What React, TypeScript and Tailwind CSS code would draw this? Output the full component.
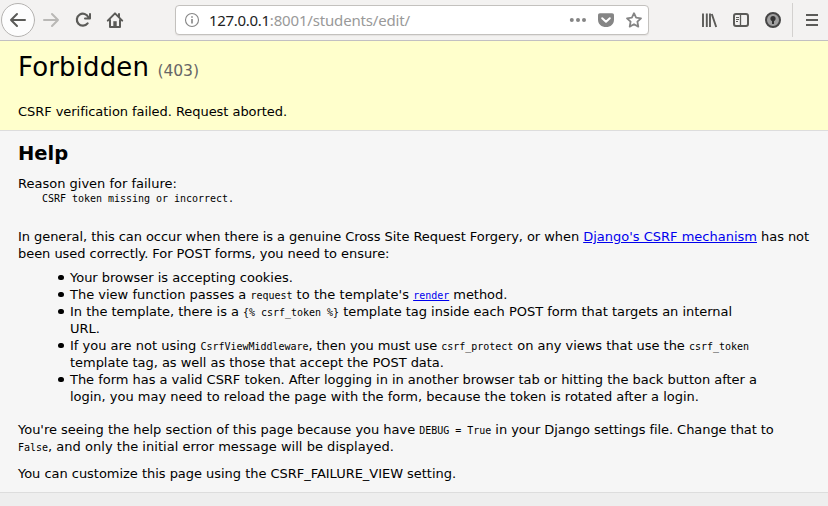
import type { ReactNode } from "react";

function Code({ children }: { children: ReactNode }) {
  return (
    <code className="font-['DejaVu_Sans_Mono',monospace] text-[10px] leading-none tracking-[-0.02px]">{children}</code>
  );
}

function Line({ children, className = "" }: { children: ReactNode; className?: string }) {
  return <span className={`block h-[17px] whitespace-nowrap ${className}`}>{children}</span>;
}

function Item({ children }: { children: ReactNode }) {
  return (
    <li className="flex gap-[6px]">
      <span className="mt-[5.5px] flex w-[6px] shrink-0">
        <span className="h-[5.5px] w-[5.5px] rounded-full bg-black" />
      </span>
      <div>{children}</div>
    </li>
  );
}

function Toolbar() {
  return (
    <header className="flex h-[41px] items-start border-b border-[#c2c0c2] bg-[#f3f2f1] text-[#5b5b58]">
      <div className="flex h-10 w-[175px] shrink-0 items-center">
        <svg width="130" height="40" viewBox="0 0 130 40" fill="none" stroke="currentColor" strokeWidth="2" strokeLinecap="round" strokeLinejoin="round">
          <circle cx="18" cy="20" r="16.5" fill="#fdfdfd" stroke="#b5b3b1" strokeWidth="1" />
          <path d="M25 20H11M17 14l-6 6 6 6" />
          <path stroke="#b9b8b6" d="M44 20h14M52 14l6 6-6 6" />
          <path d="M88.4 17.4A6 6 0 1 0 87.6 23.4" strokeWidth="2.2" />
          <path d="M90 14v4.6h-5" />
          <path d="M107.8 20.6l7.2-7.2 7.2 7.2M110 20v7h10v-7" />
          <path d="M115 21.2v5.8" strokeWidth="3.4" strokeLinecap="butt" />
          <path d="M119 14v2.5" />
        </svg>
      </div>
      <div className="mt-[5px] flex h-[30px] w-[474px] shrink-0 items-center rounded-[4px] border border-[#c3c1be] bg-white shadow-[0_1px_1px_#e5e3e1]">
        <svg className="ml-[8px] shrink-0" width="16" height="16" viewBox="0 0 16 16" fill="none" stroke="#858585">
          <circle cx="8" cy="8" r="6.5" strokeWidth="1.1" />
          <path d="M8 7v4.5M8 4.2v1.6" strokeWidth="1.6" />
        </svg>
        <div className="ml-[9px] w-[351px] whitespace-nowrap font-['Noto_Sans',sans-serif] text-[15px] leading-5 tracking-[-0.17px] text-[#999]">
          <span className="tracking-[-0.3px] text-[#222]">127.0.0.1</span>:8001/students/edit/
        </div>
        <svg className="shrink-0" width="88" height="28" viewBox="560 6 88 28" fill="#858585">
          <circle cx="571.8" cy="20" r="2" /><circle cx="578" cy="20" r="2" /><circle cx="584" cy="20" r="2" />
          <path d="M600 13.2h12c1.3 0 2 .8 2 2v4.2c0 4.7-3.5 7.6-8 7.6s-8-2.9-8-7.6v-4.2c0-1.2.7-2 2-2z" />
          <path d="M602.2 18.2l3.8 3.6 3.8-3.6" fill="none" stroke="#fff" strokeWidth="2" strokeLinecap="round" strokeLinejoin="round" />
          <path d="M634 13.2l2.1 4.5 4.9.6-3.6 3.4.9 4.9-4.3-2.4-4.3 2.4.9-4.9-3.6-3.4 4.9-.6z" fill="none" stroke="#858585" strokeWidth="1.8" strokeLinejoin="round" />
        </svg>
      </div>
      <svg className="ml-auto shrink-0" width="136" height="40" viewBox="692 0 136 40" fill="none" stroke="currentColor" strokeWidth="2">
        <path d="M703 13.5v13.5M706.8 13.5v13.5M710 13.5v13.5M711.8 14l4.4 13" strokeWidth="1.9" />
        <rect x="734" y="14" width="14" height="12" rx="2" />
        <path d="M740.5 14v12" strokeWidth="1.3" />
        <path d="M736 17.5h3M736 19.5h3M736 21.5h2" strokeWidth="1" />
        <circle cx="773" cy="20" r="7" fill="#a0a0a0" stroke="#464646" />
        <circle cx="773" cy="18.6" r="2.6" fill="#333" stroke="none" />
        <path d="M773 19v5" stroke="#333" />
        <path d="M792.5 3v34" stroke="#d3d1cf" strokeWidth="1" />
        <path d="M806 15h12M806 20h12M806 25h12" />
      </svg>
    </header>
  );
}

export default function App() {
  return (
    <div className="flex h-[506px] w-[828px] flex-col overflow-hidden bg-[#eee] font-['DejaVu_Sans',sans-serif] text-[13px] leading-[17px] text-black">
      <Toolbar />
      <section className="h-[90px] shrink-0 border-b border-[#ddd] bg-[#ffffcc] px-[18px] pt-[11px]">
        <h1 className="h-[30px] whitespace-nowrap text-[26px] leading-[30px] tracking-[0.13px]">
          Forbidden <span className="text-[15.6px] tracking-[-0.08px] text-[#666]">(403)</span>
        </h1>
        <p className="mt-[21px] tracking-[-0.05px]">CSRF verification failed. Request aborted.</p>
      </section>
      <main className="h-[362px] shrink-0 border-b border-[#ddd] bg-[#f6f6f6] pl-[18px] pt-[11px]">
        <h2 className="h-6 text-[19.5px] font-bold leading-6">Help</h2>
        <p className="mt-[9px]">Reason given for failure:</p>
        <pre className="ml-6 mt-px h-3 font-['DejaVu_Sans_Mono',monospace] text-[10px] leading-3 tracking-[-0.02px]">CSRF token missing or incorrect.</pre>
        <p className="mt-[23px]">
          <Line><span className="tracking-[-0.06px]">In general, this can occur when there is a genuine Cross Site Request Forgery, or when </span><a className="text-[#0000ee] underline">Django's CSRF mechanism</a><span className="tracking-[-0.06px]"> has not</span></Line>
          <Line className="tracking-[-0.045px]">been used correctly. For POST forms, you need to ensure:</Line>
        </p>
        <ul className="ml-10 mt-[7px]">
          <Item><Line className="tracking-[-0.02px]">Your browser is accepting cookies.</Line></Item>
          <Item><Line>The view function passes a <Code>request</Code><span className="tracking-[0.04px]"> to the template's </span><a className="text-[#0000ee]"><code className="font-['DejaVu_Sans_Mono',monospace] text-[10px] leading-none underline">render</code></a><span className="tracking-[-0.06px]"> method.</span></Line></Item>
          <Item>
            <Line className="tracking-[-0.025px]">In the template, there is a <Code>{"{% csrf_token %}"}</Code> template tag inside each POST form that targets an internal</Line>
            <Line>URL.</Line>
          </Item>
          <Item>
            <Line>If you are not using <Code>CsrfViewMiddleware</Code><span className="tracking-[-0.06px]">, then you must use </span><Code>csrf_protect</Code><span className="tracking-[-0.03px]"> on any views that use the </span><Code>csrf_token</Code></Line>
            <Line className="tracking-[-0.035px]">template tag, as well as those that accept the POST data.</Line>
          </Item>
          <Item>
            <Line className="tracking-[-0.03px]">The form has a valid CSRF token. After logging in in another browser tab or hitting the back button after a</Line>
            <Line className="tracking-[-0.015px]">login, you may need to reload the page with the form, because the token is rotated after a login.</Line>
          </Item>
        </ul>
        <p className="mt-4">
          <Line><span className="tracking-[-0.02px]">You're seeing the help section of this page because you have </span><Code>DEBUG = True</Code><span className="tracking-[-0.06px]"> in your Django settings file. Change that to</span></Line>
          <Line className="tracking-[0.025px]"><Code>False</Code>, and only the initial error message will be displayed.</Line>
        </p>
        <p className="mt-[10px] tracking-[-0.03px]">You can customize this page using the CSRF_FAILURE_VIEW setting.</p>
      </main>
    </div>
  );
}
